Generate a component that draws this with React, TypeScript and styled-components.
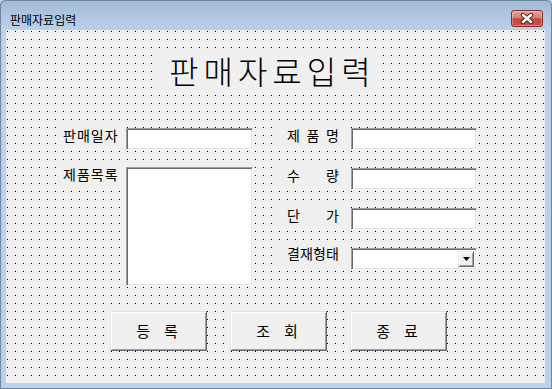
import React from 'react';
import styled, { createGlobalStyle } from 'styled-components';

const GlobalStyle = createGlobalStyle`
  html, body { margin: 0; padding: 0; background: #b9d1ea; }
  body { font-family: "Noto Sans CJK KR", "Noto Sans", sans-serif; color: #000; }
  * { box-sizing: border-box; }
`;

const Window = styled.div`
  width: 552px;
  height: 389px;
  display: flex;
  flex-direction: column;
  background: linear-gradient(180deg, #a2bad7 0px, #b2c8e2 18px, #bcd2ea 30px, #b9d1ea 100%);
  border-radius: 6px 6px 0 0;
  box-shadow: inset 0 0 0 1px #6f859f;
  overflow: hidden;
`;

const TitleBar = styled.div`
  height: 30px;
  flex: none;
  display: flex;
  align-items: flex-start;
  justify-content: space-between;
  padding: 0 9px 0 10px;
`;

const WindowTitle = styled.span`
  margin-top: 12px;
  font-size: 12px;
  line-height: 16px;
  white-space: nowrap;
`;

const CloseButton = styled.div`
  margin-top: 10px;
  width: 32px;
  height: 17px;
  border: 1px solid #7d2f27;
  border-radius: 3px;
  background: linear-gradient(180deg, #e6a192 0%, #d7806f 45%, #c4473a 52%, #c65344 100%);
  box-shadow: inset 0 0 0 1px rgba(255, 255, 255, 0.3);
  display: flex;
  align-items: center;
  justify-content: center;
`;

const Client = styled.div`
  margin: 0 7px 0 6px;
  height: 353px;
  flex: none;
  display: flex;
  flex-direction: column;
  align-items: flex-start;
  padding-top: 18px;
  background-color: #f0f0f0;
  background-image: conic-gradient(from 270deg at 1px 1px, #000 90deg, transparent 0);
  background-size: 8px 8px;
  background-position: 1px 1px;
`;

const Heading = styled.div`
  margin-left: 150px;
  width: 226px;
  height: 44px;
  padding-left: 13px;
  font-size: 32px;
  font-weight: 300;
  line-height: 44px;
  letter-spacing: 5px;
  white-space: nowrap;
  background: #f0f0f0;
`;

const FormArea = styled.div`
  margin-top: 36px;
  padding-left: 51px;
  display: flex;
  align-items: flex-start;
  gap: 22px;
`;

const FieldGrid = styled.div<{ $label: number; $field: number; $gap: number; $rowGap: number }>`
  display: grid;
  grid-template-columns: ${(p) => p.$label}px ${(p) => p.$field}px;
  column-gap: ${(p) => p.$gap}px;
  row-gap: ${(p) => p.$rowGap}px;
  align-items: start;
`;

const Label = styled.div<{ $pad: number; $lift?: number }>`
  height: 24px;
  margin-top: ${(p) => -2 - (p.$lift ?? 0)}px;
  padding-left: ${(p) => p.$pad}px;
  font-size: 14px;
  line-height: 18px;
  background: #f0f0f0;
  white-space: nowrap;
`;

const LeftCaption = styled.span`
  letter-spacing: 1px;
`;

const SpreadCaption = styled.span`
  display: flex;
  justify-content: space-between;
  width: 52px;
`;

const sunken = `
  background: #fff;
  border: 1px solid;
  border-color: #a0a0a0 #fff #fff #a0a0a0;
  box-shadow: inset 1px 1px 0 #696969, inset -1px -1px 0 #e3e3e3;
`;

const TextBox = styled.input`
  ${sunken}
  display: block;
  width: 100%;
  height: 22px;
  margin: 0;
  padding: 0 3px;
  outline: none;
  font: inherit;
  font-size: 13px;
`;

const ListBox = styled.div`
  ${sunken}
  width: 100%;
  height: 119px;
`;

const ComboBox = styled.div`
  ${sunken}
  width: 100%;
  height: 22px;
  display: flex;
  justify-content: flex-end;
  padding: 2px;
`;

const DropButton = styled.div`
  width: 16px;
  height: 100%;
  background: #f0f0f0;
  border: 1px solid;
  border-color: #e3e3e3 #696969 #696969 #e3e3e3;
  box-shadow: inset 1px 1px 0 #fff, inset -1px -1px 0 #a0a0a0;
  display: flex;
  align-items: center;
  justify-content: center;
`;

const ButtonRow = styled.div`
  margin-top: 25px;
  padding-left: 104px;
  display: flex;
  gap: 23px;
`;

const FormButton = styled.div`
  width: 97px;
  height: 40px;
  background: #f0f0f0;
  border: 1px solid;
  border-color: #e3e3e3 #696969 #696969 #e3e3e3;
  box-shadow: inset 1px 1px 0 #fff, inset -1px -1px 0 #a0a0a0;
  display: flex;
  align-items: center;
  justify-content: center;
  gap: 14px;
  font-size: 15px;
  line-height: 18px;
  padding-right: 3px;
`;

const Spread: React.FC<{ text: string }> = ({ text }) => (
  <SpreadCaption>
    {Array.from(text).map((c, i) => (
      <span key={i}>{c}</span>
    ))}
  </SpreadCaption>
);

const rightFields: { label: string; kind: 'text' | 'combo'; lift?: number }[] = [
  { label: '제품명', kind: 'text' },
  { label: '수량', kind: 'text' },
  { label: '단가', kind: 'text' },
  { label: '결재형태', kind: 'combo', lift: 2 },
];

const buttons = ['등록', '조회', '종료'];

export default function App() {
  return (
    <>
      <GlobalStyle />
      <Window>
        <TitleBar>
          <WindowTitle>판매자료입력</WindowTitle>
          <CloseButton>
            <svg width="14" height="11" viewBox="0 0 14 11">
              <path d="M3 2 L11 9 M11 2 L3 9" stroke="#4a2a28" strokeWidth="4.4" strokeLinecap="round" />
              <path d="M3 2 L11 9 M11 2 L3 9" stroke="#fff" strokeWidth="2.4" strokeLinecap="round" />
            </svg>
          </CloseButton>
        </TitleBar>
        <Client>
          <Heading>판매자료입력</Heading>
          <FormArea>
            <FieldGrid $label={66} $field={127} $gap={3} $rowGap={17}>
              <Label $pad={6}>
                <LeftCaption>판매일자</LeftCaption>
              </Label>
              <TextBox readOnly />
              <Label $pad={6}>
                <LeftCaption>제품목록</LeftCaption>
              </Label>
              <ListBox />
            </FieldGrid>
            <FieldGrid $label={72} $field={126} $gap={4} $rowGap={18}>
              {rightFields.map((f) => (
                <React.Fragment key={f.label}>
                  <Label $pad={12} $lift={f.lift}>
                    <Spread text={f.label} />
                  </Label>
                  {f.kind === 'text' ? (
                    <TextBox readOnly />
                  ) : (
                    <ComboBox>
                      <DropButton>
                        <svg width="7" height="4" viewBox="0 0 7 4">
                          <path d="M0 0 H7 L3.5 4 Z" fill="#000" />
                        </svg>
                      </DropButton>
                    </ComboBox>
                  )}
                </React.Fragment>
              ))}
            </FieldGrid>
          </FormArea>
          <ButtonRow>
            {buttons.map((b) => (
              <FormButton key={b}>
                {Array.from(b).map((c, i) => (
                  <span key={i}>{c}</span>
                ))}
              </FormButton>
            ))}
          </ButtonRow>
        </Client>
      </Window>
    </>
  );
}
